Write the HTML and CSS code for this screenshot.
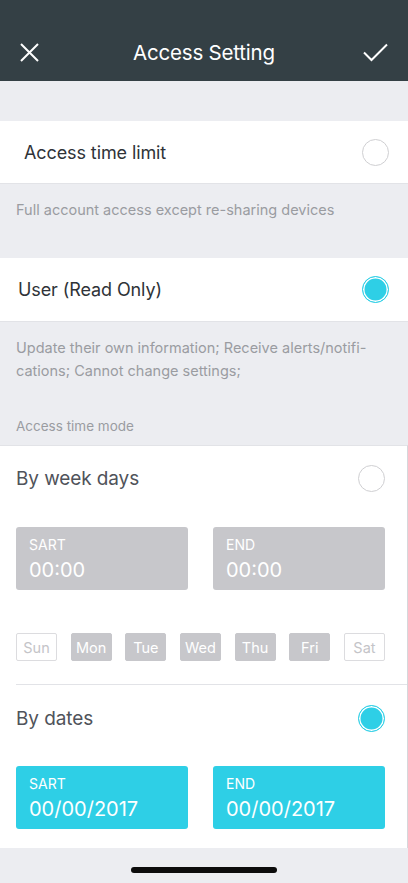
FILE: index.html
```html
<!DOCTYPE html>
<html lang="en">
<head>
<meta charset="utf-8">
<title>Access Setting</title>
<link rel="stylesheet" href="styles.css">
</head>
<body>
<div class="screen">
  <header class="topbar">
    <button class="icon-btn" aria-label="Close">
      <svg width="19" height="19" viewBox="0 0 19 19"><path d="M1 1L18 18M18 1L1 18" stroke="#fff" stroke-width="2" fill="none"/></svg>
    </button>
    <h1 class="title">Access Setting</h1>
    <button class="icon-btn" aria-label="Save">
      <svg width="25" height="19" viewBox="0 0 25 19"><path d="M1 9.5L8.5 17L24 1.5" stroke="#fff" stroke-width="2" fill="none"/></svg>
    </button>
  </header>

  <main class="content">
    <div class="option option-first">
      <span class="option-label">Access time limit</span>
      <span class="radio"></span>
    </div>
    <p class="note note-single">Full account access except re-sharing devices</p>

    <div class="option option-second">
      <span class="option-label">User (Read Only)</span>
      <span class="radio radio-on"></span>
    </div>
    <p class="note note-double">Update their own information; Receive alerts/notifi-<br>cations; Cannot change settings;</p>

    <p class="section-title">Access time mode</p>

    <section class="mode-panel">
      <div class="mode-row">
        <span class="mode-label">By week days</span>
        <span class="radio"></span>
      </div>
      <div class="time-pair">
        <div class="time-box">
          <span class="time-cap">SART</span>
          <span class="time-val">00:00</span>
        </div>
        <div class="time-box">
          <span class="time-cap">END</span>
          <span class="time-val">00:00</span>
        </div>
      </div>
      <div class="days">
        <span class="day">Sun</span>
        <span class="day day-on">Mon</span>
        <span class="day day-on">Tue</span>
        <span class="day day-on">Wed</span>
        <span class="day day-on">Thu</span>
        <span class="day day-on">Fri</span>
        <span class="day">Sat</span>
      </div>

      <div class="divider"></div>

      <div class="mode-row mode-row-dates">
        <span class="mode-label">By dates</span>
        <span class="radio radio-on"></span>
      </div>
      <div class="time-pair">
        <div class="time-box time-box-active">
          <span class="time-cap">SART</span>
          <span class="time-val">00/00/2017</span>
        </div>
        <div class="time-box time-box-active">
          <span class="time-cap">END</span>
          <span class="time-val">00/00/2017</span>
        </div>
      </div>
    </section>

    <div class="home-bar"><span class="home-indicator"></span></div>
  </main>
</div>
</body>
</html>
```

FILE: styles.css
```css
* { box-sizing: border-box; }

html, body {
  margin: 0;
  padding: 0;
  background: #ecedf1;
}

body {
  font-family: "Inter", "Open Sans", "Liberation Sans", sans-serif;
  color: #2f3338;
}

.screen {
  width: 408px;
  height: 883px;
  overflow: hidden;
  background: #ecedf1;
  display: flex;
  flex-direction: column;
}

/* Navigation bar */
.topbar {
  height: 81px;
  background: #344045;
  display: flex;
  align-items: center;
  justify-content: space-between;
  padding: 24px 20px 0 20px;
  flex-shrink: 0;
}

.icon-btn {
  background: none;
  border: 0;
  padding: 0;
  width: 25px;
  height: 24px;
  display: flex;
  align-items: center;
  justify-content: flex-start;
}

.icon-btn:last-child { justify-content: flex-end; }

.title {
  margin: 0;
  font-size: 20.5px;
  font-weight: 400;
  color: #fff;
  letter-spacing: -0.2px;
}

.content {
  display: flex;
  flex-direction: column;
  flex: 1;
}

/* Role options */
.option {
  height: 63px;
  background: #fff;
  display: flex;
  align-items: center;
  justify-content: space-between;
  padding: 0 19px 0 24px;
  border-bottom: 1px solid #e2e3e7;
}

.option-first { margin-top: 40px; }
.option-second { margin-top: 0; padding-left: 18px; height: 64px; }

.option-label {
  font-size: 18px;
  color: #2f3338;
  letter-spacing: -0.1px;
}

.radio {
  width: 27px;
  height: 27px;
  border-radius: 50%;
  border: 1.5px solid #cfcfd2;
  background: #fff;
  flex-shrink: 0;
}

.radio-on {
  border: 1.5px solid #2ecfe6;
  background: #2ecfe6;
  box-shadow: inset 0 0 0 1.5px #fff;
}

.note {
  margin: 0;
  font-size: 14.5px;
  line-height: 23px;
  color: #9a9ca1;
  padding-left: 16px;
}

.note-single {
  padding-top: 14px;
  height: 74px;
}

.note-double {
  padding-top: 14px;
  height: 86px;
}

.section-title {
  margin: 0;
  font-size: 13.5px;
  color: #9a9ca1;
  padding-left: 16px;
  height: 37px;
  line-height: 37px;
}

/* Time mode panel */
.mode-panel {
  background: #fff;
  border-top: 1px solid #e2e3e7;
  border-right: 1px solid #d6d7db;
  padding: 0 0 19px 16px;
}

.mode-row {
  height: 65px;
  display: flex;
  align-items: center;
  justify-content: space-between;
  padding-right: 22px;
}

.mode-row-dates { height: 66px; }

.mode-label {
  font-size: 19px;
  color: #50535a;
  letter-spacing: -0.1px;
}

.time-pair {
  display: flex;
  gap: 25px;
  padding-right: 22px;
  margin-top: 16px;
}

.mode-row-dates + .time-pair { margin-top: 15px; }

.time-box {
  flex: 1;
  height: 63px;
  background: #c7c7cb;
  border-radius: 3px;
  display: flex;
  flex-direction: column;
  padding: 9px 13px 0 13px;
  color: #fff;
}

.time-box-active { background: #2ecfe6; }

.time-cap {
  font-size: 14px;
  line-height: 18px;
}

.time-val {
  font-size: 20px;
  line-height: 32px;
}

.days {
  display: flex;
  justify-content: space-between;
  padding-right: 22px;
  margin-top: 43px;
  margin-bottom: 23px;
}

.day {
  width: 41px;
  height: 28px;
  border: 1px solid #dcdcdf;
  border-radius: 2px;
  display: flex;
  align-items: center;
  justify-content: center;
  font-size: 14.5px;
  color: #c4c4c8;
}

.day-on {
  background: #c7c7cb;
  border-color: #c7c7cb;
  color: #fff;
}

.divider {
  height: 1px;
  background: #e2e3e7;
}

/* Home indicator */
.home-bar {
  flex: 1;
  display: flex;
  justify-content: center;
  align-items: flex-end;
  padding-bottom: 10px;
}

.home-indicator {
  width: 146px;
  height: 6px;
  border-radius: 3px;
  background: #0c0c0c;
}
```
